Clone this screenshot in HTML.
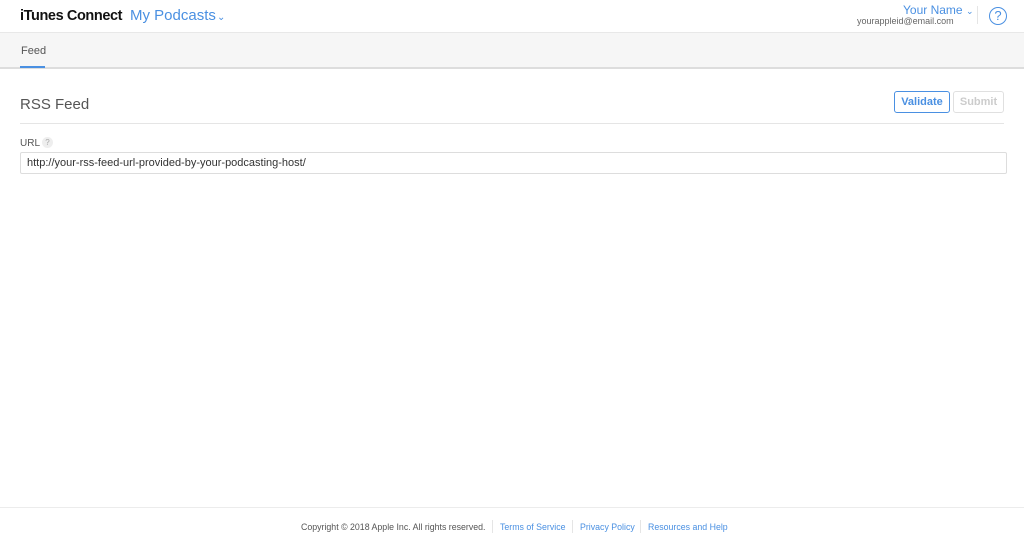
<!DOCTYPE html>
<html><head><style>
*{margin:0;padding:0;box-sizing:border-box}
body{width:1024px;height:544px;background:#fff;font-family:"Liberation Sans",sans-serif;position:relative;overflow:hidden;color:#333}
.a{position:absolute;white-space:nowrap}
.blue{color:#4a90e2}
</style></head><body>
<div class="a" style="left:20px;top:8px;font-size:14.5px;font-weight:bold;color:#111;letter-spacing:-0.4px">iTunes Connect</div>
<div class="a blue" style="left:130px;top:7px;font-size:15px;">My Podcasts <span style="font-size:10px;position:relative;left:-3px">&#8964;</span></div>
<div class="a blue" style="left:903px;top:3px;font-size:12px">Your Name <span style="font-size:9px">&#8964;</span></div>
<div class="a" style="left:857px;top:16px;font-size:9px;color:#666">yourappleid@email.com</div>
<div class="a" style="left:977px;top:6px;width:1px;height:18px;background:#e5e5e5"></div>
<div class="a blue" style="left:989px;top:7px;width:18px;height:18px;border:1px solid #4a90e2;border-radius:50%;text-align:center;font-size:13px;line-height:16px">?</div>
<div class="a" style="left:0;top:32px;width:1024px;height:37px;background:#f6f6f6;border-top:1px solid #e8e8e8;border-bottom:2px solid #ddd"></div>
<div class="a" style="left:21px;top:45px;font-size:11px;color:#555">Feed</div>
<div class="a" style="left:20px;top:66px;width:25px;height:2px;background:#4a90e2"></div>
<div class="a" style="left:20px;top:96px;font-size:15px;color:#555">RSS Feed</div>
<div class="a blue" style="left:894px;top:91px;width:56px;height:22px;border:1px solid #4a90e2;border-radius:3px;font-size:11px;font-weight:bold;text-align:center;line-height:20px">Validate</div>
<div class="a" style="left:953px;top:91px;width:51px;height:22px;border:1px solid #e0e0e0;border-radius:3px;font-size:11px;font-weight:bold;color:#ccc;text-align:center;line-height:20px">Submit</div>
<div class="a" style="left:20px;top:123px;width:984px;height:1px;background:#e5e5e5"></div>
<div class="a" style="left:20px;top:138px;font-size:10px;color:#555">URL</div>
<div class="a" style="left:42px;top:137px;width:11px;height:11px;border-radius:50%;background:#eee;color:#aaa;font-size:8px;text-align:center;line-height:11px">?</div>
<div class="a" style="left:20px;top:152px;width:987px;height:22px;border:1px solid #ddd;border-radius:2px;font-size:11px;color:#333;padding-left:6px;line-height:20px">http://your-rss-feed-url-provided-by-your-podcasting-host/</div>
<div class="a" style="left:0;top:507px;width:1024px;height:1px;background:#ececec"></div>
<div class="a" style="left:301px;top:522px;font-size:8.8px;color:#555">Copyright © 2018 Apple Inc. All rights reserved.</div>
<div class="a" style="left:492px;top:520px;width:1px;height:13px;background:#e5e5e5"></div>
<div class="a blue" style="left:500px;top:522px;font-size:8.8px">Terms of Service</div>
<div class="a" style="left:572px;top:520px;width:1px;height:13px;background:#e5e5e5"></div>
<div class="a blue" style="left:580px;top:522px;font-size:8.8px">Privacy Policy</div>
<div class="a" style="left:640px;top:520px;width:1px;height:13px;background:#e5e5e5"></div>
<div class="a blue" style="left:648px;top:522px;font-size:8.8px">Resources and Help</div>
</body></html>
